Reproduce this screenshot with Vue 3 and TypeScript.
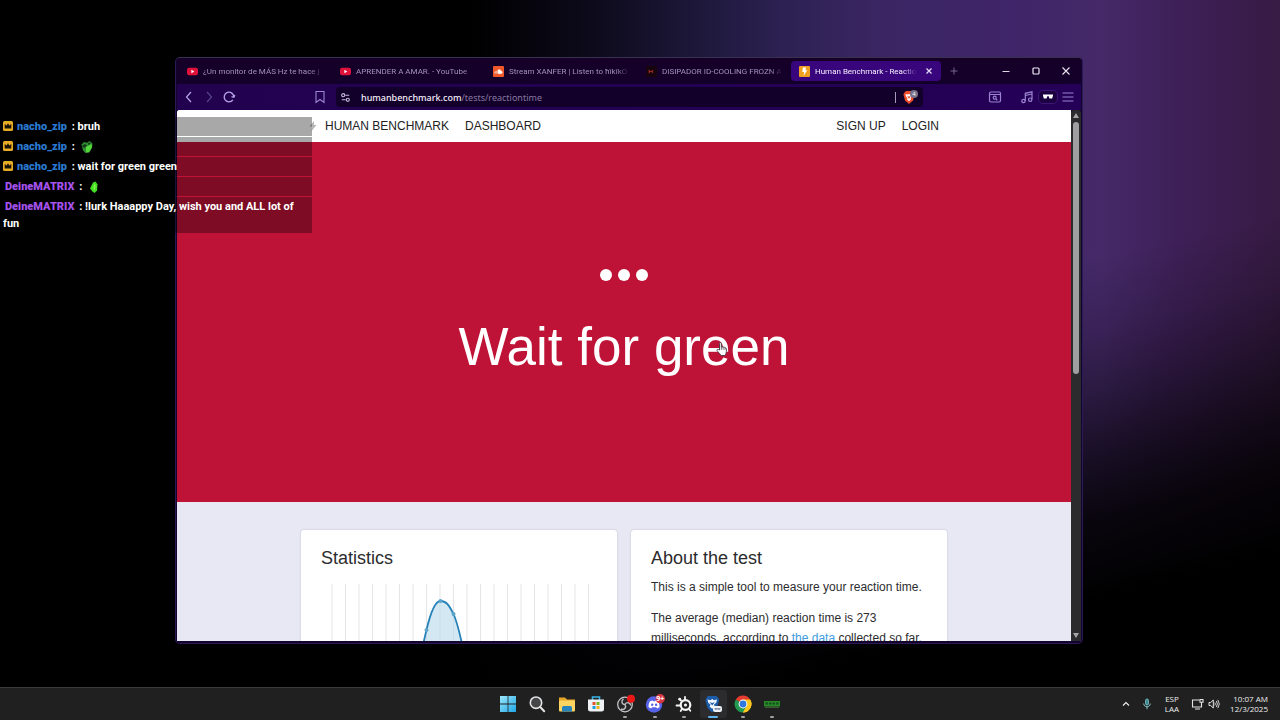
<script setup lang="ts">
interface Tab {
  title: string
  icon: 'youtube' | 'soundcloud' | 'shop' | 'bolt'
  active?: boolean
}

interface ChatLine {
  user: string
  tone: 'blue' | 'purple'
  crown?: boolean
  text?: string
  emote?: 'frog' | 'leaf'
}

const tabs: Tab[] = [
  { title: '¿Un monitor de MÁS Hz te hace j', icon: 'youtube' },
  { title: 'APRENDER A AMAR. - YouTube', icon: 'youtube' },
  { title: 'Stream XANFER | Listen to ħîkîkO', icon: 'soundcloud' },
  { title: 'DISIPADOR ID-COOLING FROZN A', icon: 'shop' },
  { title: 'Human Benchmark - Reaction', icon: 'bolt', active: true },
]

const chat: ChatLine[] = [
  { user: 'nacho_zip', tone: 'blue', crown: true, text: 'bruh' },
  { user: 'nacho_zip', tone: 'blue', crown: true, emote: 'frog' },
  { user: 'nacho_zip', tone: 'blue', crown: true, text: 'wait for green green' },
  { user: 'DeineMATRIX', tone: 'purple', emote: 'leaf' },
  { user: 'DeineMATRIX', tone: 'purple', text: '!lurk Haaappy Day, wish you and ALL lot of fun' },
]

const gridLines: number[] = Array.from({ length: 20 }, (_, i) => 11 + i * 13.5)
</script>

<template>
  <div class="desktop">
    <section class="window" aria-label="Browser">
      <header class="tabstrip">
        <div class="tabs">
          <div v-for="tab in tabs" :key="tab.title" class="tab" :class="{ active: tab.active }">
            <svg v-if="tab.icon === 'youtube'" class="favicon" viewBox="0 0 12 12" aria-hidden="true">
              <rect x="0" y="2" width="12" height="8" rx="2.4" fill="#e0123c" />
              <path d="M4.8 4.2 8 6 4.8 7.8z" fill="#fff" />
            </svg>
            <svg v-else-if="tab.icon === 'soundcloud'" class="favicon" viewBox="0 0 12 12" aria-hidden="true">
              <rect width="12" height="12" rx="1" fill="#f0582a" />
              <path d="M5.6 8.2V4.4c1.6-.9 3 .1 3.100 1.400 1.700-.2 2 2.400.3 2.400zM4.400 5v3.200M3.200 5.600v2.600M2 6.200v1.800" fill="#fff" stroke="#fff" stroke-width=".7" />
            </svg>
            <svg v-else-if="tab.icon === 'shop'" class="favicon" viewBox="0 0 12 12" aria-hidden="true">
              <rect width="12" height="12" rx="1" fill="#17040f" />
              <path d="M3.500 4v4M3.500 6h2.500M7.500 4.500 6.500 6l1 1.500" fill="none" stroke="#9c2c22" stroke-width="1.300" />
            </svg>
            <svg v-else class="favicon" viewBox="0 0 12 12" aria-hidden="true">
              <rect width="12" height="12" rx="1" fill="#f0a020" />
              <path d="M4.200 1.500h3.600L7 4.500h2L5 10.500l.6-4H3.600z" fill="#fff" />
            </svg>
            <span class="tab-title">{{ tab.title }}</span>
            <button v-if="tab.active" class="icon-btn tab-close" aria-label="Close tab">
              <svg viewBox="0 0 8 8" width="8" height="8"><path d="m1.500 1.500 5 5m0-5-5 5" stroke="#e6dcf8" stroke-width="1.200" /></svg>
            </button>
          </div>
          <button class="icon-btn new-tab" aria-label="New tab">
            <svg viewBox="0 0 10 10" width="10" height="10"><path d="M5 1.500v7M1.500 5h7" stroke="#74648f" stroke-width="1" /></svg>
          </button>
        </div>
        <div class="controls">
          <button class="icon-btn" aria-label="Minimize">
            <svg viewBox="0 0 10 10" width="10" height="10"><path d="M1.500 5.500h7" stroke="#ddd8e6" stroke-width="1.200" /></svg>
          </button>
          <button class="icon-btn" aria-label="Maximize">
            <svg viewBox="0 0 10 10" width="10" height="10"><rect x="2" y="2" width="6" height="6" rx="1" fill="none" stroke="#eeeaf5" stroke-width="1.200" /></svg>
          </button>
          <button class="icon-btn" aria-label="Close">
            <svg viewBox="0 0 10 10" width="10" height="10"><path d="m1.500 1.500 7 7m0-7-7 7" stroke="#e8e4f0" stroke-width="1.100" /></svg>
          </button>
        </div>
      </header>

      <div class="toolbar">
        <div class="nav-buttons">
          <button class="icon-btn" aria-label="Back">
            <svg viewBox="0 0 14 14" width="14" height="14"><path d="M9 2 4.500 7 9 12" fill="none" stroke="#b7a3ea" stroke-width="1.200" /></svg>
          </button>
          <button class="icon-btn" aria-label="Forward">
            <svg viewBox="0 0 14 14" width="14" height="14"><path d="m5 2 4.500 5L5 12" fill="none" stroke="#57418c" stroke-width="1.200" /></svg>
          </button>
          <button class="icon-btn" aria-label="Reload">
            <svg viewBox="0 0 14 14" width="14" height="14"><path d="M10.900 9.800A4.800 4.800 0 1 1 11.800 7M9.500 6.700l2.300.6 1.100-2.200" fill="none" stroke="#b7a3ea" stroke-width="1.300" /></svg>
          </button>
        </div>
        <button class="icon-btn bookmark" aria-label="Bookmark">
          <svg viewBox="0 0 12 14" width="12" height="14"><path d="M2 1.500h8v11L6 9.500l-4 3z" fill="none" stroke="#9d88cf" stroke-width="1.100" /></svg>
        </button>
        <div class="address">
          <svg class="site" viewBox="0 0 12 12" width="11" height="11" aria-hidden="true">
            <g fill="none" stroke="#c4b9dc" stroke-width="1.200">
              <circle cx="3.500" cy="3.500" r="1.700" /><path d="M5.800 3.500h4.200M2 8.500h4.200" /><circle cx="8.500" cy="8.500" r="1.700" />
            </g>
          </svg>
          <span class="url"><b>humanbenchmark.com</b>/tests/reactiontime</span>
          <span class="divider"></span>
          <button class="icon-btn shield" aria-label="Shields">
            <svg viewBox="0 0 18 16" width="18" height="16">
              <path d="M3.500 3.500 5 2h6l1.500 1.500 1 2-1.500 6L8 15l-4-3.500-1.500-6z" fill="#ee4a2b" />
              <path d="m4.500 5 2 .5 1.500-.5 1.500.5 2-.5-.6 2.500L9.500 9l.6 1.300L8 12.200 5.900 10.300 6.500 9 5 7.500z" fill="#fff" />
              <path d="m6.300 7 1.700.6L9.700 7 8 10z" fill="#ee4a2b" />
              <circle cx="13" cy="5" r="4" fill="#77718a" />
              <text x="13" y="7" text-anchor="middle" font-size="6" fill="#fff">4</text>
            </svg>
          </button>
        </div>
        <div class="tools">
          <button class="icon-btn" aria-label="Search tabs">
            <svg viewBox="0 0 14 14" width="14" height="14"><g fill="none" stroke="#9a84d2" stroke-width="1.200"><rect x="1.500" y="2" width="11" height="10" rx="1.500" /><path d="M1.500 4.500h11" /><circle cx="6.700" cy="7.700" r="1.500" /><path d="m8 9 1.300 1.300" /></g></svg>
          </button>
          <button class="icon-btn music" aria-label="Playlist">
            <svg viewBox="0 0 14 14" width="14" height="14"><g fill="none" stroke="#9a84d2" stroke-width="1.200"><path d="M5.300 11V3.300L12 1.800v7.500M5.300 5.500 12 4" /><circle cx="3.500" cy="11" r="1.700" /><circle cx="10.200" cy="9.700" r="1.700" /></g></svg>
          </button>
          <button class="icon-btn incognito" aria-label="Private profile">
            <svg viewBox="0 0 12 6" width="12" height="6"><path d="M1 .5h10v1L10.200 4.500H7.500L6.400 2h-.8L4.500 4.500H1.800L1 1.500z" fill="#fff" /></svg>
          </button>
          <button class="icon-btn" aria-label="Menu">
            <svg viewBox="0 0 12 12" width="12" height="12"><path d="M.5 2h11M.5 6h11M.5 10h11" stroke="#9a84d2" stroke-width="1.200" /></svg>
          </button>
        </div>
      </div>

      <div class="viewport">
        <main class="page">
          <nav class="site-nav">
            <div class="container nav-row">
              <div class="nav-group">
                <a href="#" class="bolt" aria-label="Home">
                  <svg viewBox="0 0 8 12" width="8" height="12"><path d="M5 1 .5 6.500h2.800L2.500 11 7.500 5H4.800z" fill="#b4b4b4" /></svg>
                </a>
                <a href="#">HUMAN BENCHMARK</a>
                <a href="#">DASHBOARD</a>
              </div>
              <div class="nav-group">
                <a href="#">SIGN UP</a>
                <a href="#">LOGIN</a>
              </div>
            </div>
          </nav>

          <section class="test">
            <div class="dots"><i></i><i></i><i></i></div>
            <h1>Wait for green</h1>
          </section>

          <div class="container cards">
            <article class="card">
              <h2>Statistics</h2>
              <svg class="chart" viewBox="0 0 276 130" role="img" aria-label="Reaction time distribution">
                <line v-for="x in gridLines" :key="x" :x1="x" :x2="x" y1="0" y2="130" stroke="#e5e5e8" stroke-width="1" />
                <path d="M97 90C99 75 102 60 105.500 46 109 31 114 17 119.500 17 126 17 129 23 132.500 30 138 42 143 68 147 90z" fill="#b5d8ea" fill-opacity=".6" />
                <path d="M97 90C99 75 102 60 105.500 46 109 31 114 17 119.500 17 126 17 129 23 132.500 30 138 42 143 68 147 90" fill="none" stroke="#2582b8" stroke-width="1.800" />
                <g fill="#5ba3ca"><circle cx="105.500" cy="46" r="2" /><circle cx="119.500" cy="17" r="2" /><circle cx="132.500" cy="30" r="2" /></g>
              </svg>
            </article>
            <article class="card">
              <h2>About the test</h2>
              <p>This is a simple tool to measure your reaction time.</p>
              <p>The average (median) reaction time is 273 milliseconds, according to <a href="#">the data</a> collected so far.</p>
            </article>
          </div>
        </main>
        <div class="scrollbar" aria-hidden="true">
          <span class="arrow up"></span>
          <span class="thumb"></span>
          <span class="arrow down"></span>
        </div>
      </div>
    </section>

    <aside class="chat" aria-label="Chat">
      <div v-for="(line, i) in chat" :key="i" class="chat-line">
        <svg v-if="line.crown" class="crown" viewBox="0 0 10 10" width="10" height="10" aria-hidden="true">
          <rect width="10" height="10" rx="1.500" fill="#e8ac26" />
          <path d="m1.700 3 2 1.500L5 2.300l1.300 2.200 2-1.500v4.600H1.700z" fill="#1a1204" />
        </svg>
        <span class="user" :class="line.tone">{{ line.user }}</span>
        <span> : </span>
        <span v-if="line.text">{{ line.text }}</span>
        <svg v-else-if="line.emote === 'frog'" class="emote" viewBox="0 0 14 14" width="14" height="14" aria-hidden="true">
          <path d="M1.500 4.500 4 2l3 .8L9.500 1l3 2.500L12 8l-2.500 4.500-4 .5L3 10.500z" fill="#2f8c32" />
          <path d="m6 7 5.500-3 .5 3-3 5-3 .5z" fill="#55d83a" />
          <path d="m2 6 3-2 2 1.500L4 8zM8 3l2-.5.500 1.500L8.500 5z" fill="#17351b" />
        </svg>
        <svg v-else class="emote" viewBox="0 0 14 14" width="14" height="14" aria-hidden="true">
          <path d="M6 2.500 8.500 1.500l2 3-.5 6-2.500 2.500-2-1.500L3 8.500l1.500-3z" fill="#42e022" />
          <path d="m7 4 1.500 1-.5 5-1.500-1z" fill="#8bf04d" />
        </svg>
      </div>
    </aside>

    <svg class="pointer" viewBox="0 0 14 16" aria-hidden="true">
      <path d="M4.500 9V2.500c0-1.300 1.800-1.300 1.800 0V6c2.200-.2 5.200.4 5.200 2.200 0 3.200-.6 5.800-2 6.300H6.500C5 13.500 3.500 11.300 2 9.500 1.600 8.500 2.700 7.800 4.500 9z" fill="#fff" stroke="#413b45" stroke-width=".9" />
      <path d="M6.300 6v3M8.200 6.300v2.500M10 7v2" stroke="#413b45" stroke-width=".7" />
    </svg>

    <footer class="taskbar">
      <div></div>
      <div class="apps">
        <button class="app" aria-label="Start">
          <svg viewBox="0 0 20 20"><defs><linearGradient id="win" x2="1" y2="1"><stop stop-color="#9be8fb" /><stop offset="1" stop-color="#1fa6e6" /></linearGradient></defs><path d="M2 2h7.600v7.600H2zm8.400 0H18v7.600h-7.600zM2 10.400h7.600V18H2zm8.400 0H18V18h-7.600z" fill="url(#win)" /></svg>
        </button>
        <button class="app" aria-label="Search">
          <svg viewBox="0 0 20 20"><circle cx="9" cy="8.700" r="5.700" fill="#454648" stroke="#e4e4e4" stroke-width="1.600" /><path d="m13.200 13 4 4.300" stroke="#e4e4e4" stroke-width="2" stroke-linecap="round" /></svg>
        </button>
        <button class="app" aria-label="File Explorer">
          <svg viewBox="0 0 20 20"><path d="M2 3.500h6l2 2h8v3H2z" fill="#e5a528" /><rect x="2" y="6.500" width="16" height="11" rx="1" fill="#fbd461" /><path d="M5 17.500v-4a1.500 1.500 0 0 1 1.500-1.500h7a1.500 1.500 0 0 1 1.500 1.500v4z" fill="#2683bd" /></svg>
        </button>
        <button class="app" aria-label="Store">
          <svg viewBox="0 0 20 20"><path d="M6.500 6V3h7v3" fill="none" stroke="#35b4e8" stroke-width="1.600" /><path d="M2 5.500h16V15a2.500 2.500 0 0 1-2.500 2.500h-11A2.500 2.500 0 0 1 2 15z" fill="#eef1f4" /><path d="M6.500 8h3v3h-3z" fill="#e8502e" /><path d="M10.500 8h3v3h-3z" fill="#78b61f" /><path d="M6.500 12h3v3h-3z" fill="#1d9ce0" /><path d="M10.500 12h3v3h-3z" fill="#f1b21d" /></svg>
        </button>
        <button class="app running" aria-label="OBS Studio">
          <svg viewBox="0 0 20 20"><circle cx="10" cy="10.500" r="7.300" fill="#252527" stroke="#c9c9cc" stroke-width="1.200" /><path d="M10 10.500C6.500 10.500 6 6.500 8.500 4.800M10 10.500c1.800-3.200 5.400-1.800 5.800 1M10 10.500c1.800 3.200-1 6-4 4.500" fill="none" stroke="#bdbdc1" stroke-width="1.400" /><circle cx="16" cy="4.700" r="4" fill="#ef1616" /></svg>
        </button>
        <button class="app running" aria-label="Discord">
          <svg viewBox="0 0 20 20"><circle cx="9" cy="10.500" r="8.200" fill="#5662e8" /><path d="M5 7.300 7.700 6.500l.5.800h1.800l.5-.8 2.600.8c1.200 2.200 1.600 4 1.400 6l-2.500 1.200-.8-1.200H7l-.8 1.200-2.600-1.200c-.2-2.200.3-4.200 1.400-6z" fill="#fff" /><circle cx="7.200" cy="10.800" r="1.200" fill="#5662e8" /><circle cx="11.100" cy="10.800" r="1.200" fill="#5662e8" /><circle cx="15.200" cy="4.700" r="4.700" fill="#d83742" /><text x="15.200" y="7.200" text-anchor="middle" font-size="7" font-weight="700" fill="#fff">9+</text></svg>
        </button>
        <button class="app running" aria-label="SteelSeries">
          <svg viewBox="0 0 20 20"><circle cx="11.500" cy="11" r="4.800" fill="none" stroke="#f4f4f4" stroke-width="2.200" /><circle cx="11.500" cy="11" r="1.600" fill="#f4f4f4" /><path d="M11 2.800V6M2.500 11.500h4.200M7 6.500 5.500 5M8 15l-1.300 2M15 15l1.300 1.700" stroke="#f4f4f4" stroke-width="1.800" stroke-linecap="round" /><circle cx="5.700" cy="5.200" r="1.400" fill="#f4f4f4" /></svg>
        </button>
        <button class="app running current" aria-label="Brave">
          <svg viewBox="0 0 20 20"><path d="M3 4.500 5 2h8.500l2 2.500.5 2-2 7.500-5 4.500L4.500 14l-2-7.500z" fill="#1c5ca8" /><path d="m4.500 5.500 3 .7L9.200 5l1.800 1.200 3-.7-.8 3.200L11 10.500l.8 2.300-2.600 2-2.500-2 .8-2.300L5.300 8.700z" fill="#f4f8fc" /><path d="m6.500 8 2.700 1 2.700-1-2.700 3.500z" fill="#1c5ca8" /><rect x="10" y="12" width="9" height="6" rx="2" fill="#eef2f8" /><path d="M11.500 14h6v1l-.7 1h-1.300l-1-.8-1 .8h-1.300l-.7-1z" fill="#8a97ab" /></svg>
        </button>
        <button class="app running" aria-label="Chrome">
          <svg viewBox="0 0 20 20"><path d="M10 10 2.700 5.800A8.400 8.400 0 0 1 17.300 5.800z" fill="#e63c30" /><path d="M10 10V5.800h7.300A8.400 8.400 0 0 1 10 18.400z" fill="#fcc61b" /><path d="M10 10v8.400A8.400 8.400 0 0 1 2.700 5.800z" fill="#229a50" /><path d="m6.300 12.100-3.600-6.300L10 10zM13.700 12.100 10 18.400V10z" fill="#229a50" /><path d="m13.700 12.100-3.700 6.300a8.400 8.400 0 0 0 7.300-12.600H10z" fill="#fcc61b" /><circle cx="10" cy="10" r="4.400" fill="#fff" /><circle cx="10" cy="10" r="3.400" fill="#3077de" /></svg>
        </button>
        <button class="app running" aria-label="Memory monitor">
          <svg viewBox="0 0 20 20"><rect x="2" y="7" width="16" height="5.500" fill="#268a29" /><path d="M3.500 8.500h2.500v2H3.500zm3.500 0h2.500v2H7zm3.500 0H13v2h-2.500zm3.500 0h2.500v2H14z" fill="#164f19" /><path d="M3 12.500h14V14H3z" fill="#3c5a2f" /></svg>
        </button>
      </div>
      <div class="tray">
        <button class="icon-btn" aria-label="Hidden icons">
          <svg viewBox="0 0 10 10" width="10" height="10"><path d="m2 6.500 3-3 3 3" fill="none" stroke="#eee" stroke-width="1.200" /></svg>
        </button>
        <button class="icon-btn mic" aria-label="Microphone">
          <svg viewBox="0 0 10 12" width="10" height="12"><rect x="3.500" y="1" width="3" height="6" rx="1.500" fill="#3c8c92" stroke="#83c5c9" stroke-width=".8" /><path d="M1.700 5.500c0 4.300 6.600 4.300 6.600 0M5 8.800v2.400" fill="none" stroke="#83c5c9" stroke-width="1" /></svg>
        </button>
        <div class="stack lang"><span>ESP</span><span>LAA</span></div>
        <div class="status">
          <svg viewBox="0 0 14 12" width="14" height="12"><path d="M8.500 2h-7v7h9V6.500M4 11h5" fill="none" stroke="#e4e4e4" stroke-width="1.100" /><path d="M9 1.500h3v2.700H9zM10.500 4v4" fill="none" stroke="#e4e4e4" stroke-width="1.100" /></svg>
          <svg viewBox="0 0 12 12" width="12" height="12"><path d="M1 4.500h1.700L5.300 2v8L2.700 7.500H1z" fill="none" stroke="#e4e4e4" stroke-width="1" /><path d="M6.800 4.500q1.200 1.500 0 3M8.300 3q2.200 3 0 6M9.800 1.800q3 4.200 0 8.400" fill="none" stroke="#cfcfcf" stroke-width="1" /></svg>
        </div>
        <div class="stack clock"><span>10:07 AM</span><span>12/3/2025</span></div>
      </div>
    </footer>
  </div>
</template>

<style>
body {
  background: #000;
}
</style>

<style scoped>
* {
  box-sizing: border-box;
}

.desktop {
  position: relative;
  display: flex;
  flex-direction: column;
  justify-content: flex-end;
  min-height: 100vh;
  overflow: hidden;
  background:
    linear-gradient(166deg, transparent 51%, rgba(0, 0, 0, 0.16) 58%, rgba(0, 0, 0, 0.38) 64%, rgba(0, 0, 0, 0.64) 70%, rgba(0, 0, 0, 0.86) 76%, #000 84%),
    linear-gradient(90deg, #000 37%, #0c0a1a 46%, #1c1738 54%, #2c2152 61%, #3b2663 69%, #3f2569 79%, #452968 86%, #3e2058 92%, #371b44 100%);
  font-family: "Liberation Sans", Arial, sans-serif;
}

.icon-btn {
  display: grid;
  place-items: center;
  padding: 0;
  border: 0;
  background: none;
  color: inherit;
}

svg text {
  font-family: "Open Sans", sans-serif;
}

.window {
  position: absolute;
  inset: 57px 197px 76px 175px;
  display: flex;
  flex-direction: column;
  padding: 0 1px 2px;
  border: 1px solid #2b1a55;
  border-top-color: #3a3050;
  border-radius: 5px;
  background: #12042e;
  overflow: hidden;
}

.tabstrip {
  display: flex;
  justify-content: space-between;
  height: 26px;
  padding-left: 2px;
  background: linear-gradient(#160028, #13002a);
  font-family: Roboto, sans-serif;
}

.tabs {
  display: flex;
  align-items: center;
  gap: 3px;
}

.tab {
  display: flex;
  align-items: center;
  gap: 5px;
  width: 150px;
  height: 20px;
  padding: 0 5px 0 8px;
  border-radius: 4px;
  color: #a292bc;
  font-size: 8px;
}

.tab.active {
  background: #38057c;
  color: #f4eefd;
}

.favicon {
  flex: none;
  width: 11px;
  height: 11px;
}

.tab-title {
  flex: 1;
  overflow: hidden;
  white-space: nowrap;
  mask-image: linear-gradient(90deg, #000 calc(100% - 14px), transparent);
}

.tab-close {
  width: 14px;
}

.new-tab {
  width: 20px;
  height: 20px;
}

.controls {
  display: flex;
}

.controls .icon-btn {
  width: 30px;
}

.toolbar {
  display: flex;
  align-items: center;
  height: 26px;
  padding: 0 7px 0 5px;
  background: linear-gradient(90deg, #22024f, #240056);
}

.nav-buttons {
  display: flex;
  gap: 6px;
}

.bookmark {
  margin-left: 78px;
}

.address {
  display: flex;
  flex: 1;
  align-items: center;
  height: 20px;
  margin-left: 10px;
  padding: 0 4px;
  border-radius: 4px;
  background: #13002a;
}

.url {
  flex: 1;
  margin-left: 10px;
  color: #85769f;
  font-family: "Noto Sans", sans-serif;
  font-size: 9px;
}

.url b {
  color: #f3effa;
  font-weight: 500;
}

.divider {
  width: 1px;
  height: 11px;
  margin-right: 5px;
  background: #a59bb8;
}

.tools {
  display: flex;
  align-items: center;
  gap: 5px;
  margin-left: 65px;
}

.music {
  margin-left: 13px;
}

.incognito {
  width: 20px;
  height: 14px;
  margin: 0 -1px;
  border: 1px solid #3d1478;
  border-radius: 5px;
  background: #1b0140;
}

.viewport {
  display: flex;
  flex: 1;
  min-height: 0;
}

.page {
  flex: 1;
  overflow: hidden;
  border-top-left-radius: 3px;
  background: #e8e8f4;
  color: #2c2c2e;
}

.container {
  width: 646px;
  max-width: 100%;
  margin: 0 auto;
}

.site-nav {
  background: #fff;
  font-size: 12px;
}

.nav-row {
  display: flex;
  align-items: center;
  justify-content: space-between;
  height: 32px;
  padding: 0 8px;
}

.nav-group {
  display: flex;
  align-items: center;
  gap: 16px;
}

.nav-group a {
  color: #222;
  text-decoration: none;
}

.nav-group .bolt {
  display: flex;
  margin-right: -8px;
}

.test {
  display: flex;
  flex-direction: column;
  align-items: center;
  height: 360px;
  padding-top: 127px;
  background: #be1337;
  color: #fff;
}

.dots {
  display: flex;
  gap: 6px;
}

.dots i {
  width: 12px;
  height: 12px;
  border-radius: 50%;
  background: #fff;
}

h1 {
  margin: 36px 0 0;
  font-size: 53px;
  font-weight: 400;
  line-height: 60px;
}

.cards {
  display: grid;
  grid-template-columns: 1fr 1fr;
  gap: 14px;
  padding-top: 28px;
}

.card {
  height: 220px;
  padding: 17px 20px;
  border-radius: 3px;
  background: #fff;
  box-shadow: 0 0 2px rgba(60, 60, 90, 0.25);
}

h2 {
  margin: 0;
  font-size: 18px;
  font-weight: 400;
  line-height: 22px;
}

.card p {
  margin: 8px 0 11px;
  font-size: 12px;
  line-height: 20px;
}

.card p a {
  color: #3d9be0;
  text-decoration: none;
}

.chart {
  display: block;
  width: 100%;
  margin-top: 15px;
}

.scrollbar {
  display: flex;
  flex-direction: column;
  align-items: center;
  width: 10px;
  padding: 3px 0;
  border-radius: 3px 3px 0 0;
  background: #2b2b2d;
}

.arrow {
  border: 3px solid transparent;
}

.up {
  border-top: 0;
  border-bottom: 5px solid #a5a5a8;
}

.down {
  margin-top: auto;
  border-bottom: 0;
  border-top: 5px solid #a5a5a8;
}

.thumb {
  width: 6px;
  height: 48%;
  margin-top: 4px;
  border-radius: 3px;
  background: #9f9fa2;
}

.chat {
  position: absolute;
  top: 117px;
  left: 0;
  display: flex;
  flex-direction: column;
  gap: 1px;
  width: 312px;
  color: #fff;
  font-family: Roboto, sans-serif;
  font-size: 11px;
  font-weight: 700;
  line-height: 17px;
}

.chat-line {
  min-height: 19px;
  padding: 1px 3px;
  background: rgba(0, 0, 0, 0.34);
}

.user {
  margin: 0 2px;
  font-weight: 900;
}

.crown {
  margin-right: 2px;
  vertical-align: -1px;
}

.emote {
  display: inline-block;
  height: 14px;
  margin: -2px 0 -2px 2px;
  vertical-align: -2px;
}

.blue {
  color: #2b78d0;
}

.purple {
  color: #a552ec;
}

.pointer {
  position: absolute;
  top: 341px;
  left: 715px;
  width: 14px;
  height: 16px;
}

.taskbar {
  display: grid;
  grid-template-columns: 1fr 293px 1fr;
  height: 33px;
  border-top: 1px solid #3b3b3d;
  background: #202021;
  color: #eee;
}

.apps {
  display: grid;
  grid-template-columns: repeat(10, 1fr);
}

.app {
  position: relative;
  display: grid;
  place-items: center;
  margin: 2px 1px;
  padding: 0;
  border: 0;
  border-radius: 3px;
  background: none;
}

.app svg {
  width: 20px;
  height: 20px;
}

.app.running::after {
  content: "";
  position: absolute;
  bottom: 0;
  width: 4px;
  height: 2px;
  border-radius: 1px;
  background: #a2a2a4;
}

.app.current {
  background: #2c2c2e;
}

.app.current::after {
  width: 10px;
  background: #60b5ee;
}

.tray {
  display: flex;
  align-items: center;
  justify-content: flex-end;
  padding-right: 12px;
  font-family: "Open Sans", sans-serif;
  font-size: 8px;
  line-height: 10px;
}

.mic {
  margin-left: 11px;
}

.stack {
  display: flex;
  flex-direction: column;
}

.lang {
  align-items: center;
  margin-left: 13px;
}

.status {
  display: flex;
  gap: 3px;
  margin-left: 12px;
}

.clock {
  align-items: flex-end;
  margin-left: 10px;
}
</style>
